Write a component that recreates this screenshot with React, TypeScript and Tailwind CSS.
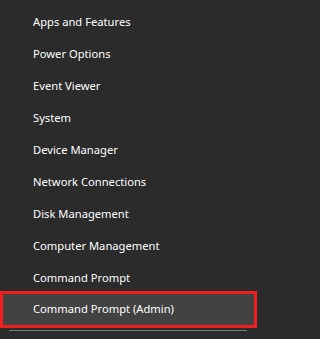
const items = [
  "Apps and Features",
  "Power Options",
  "Event Viewer",
  "System",
  "Device Manager",
  "Network Connections",
  "Disk Management",
  "Computer Management",
  "Command Prompt",
];

export default function App() {
  return (
    <div className="min-h-screen w-full bg-[#2b2b2b]">
      <div
        className="h-[339px] w-[257px] overflow-hidden pt-[6px] text-[11.2px] text-white"
        style={{ fontFamily: '"Segoe UI", "Noto Sans", "Open Sans", sans-serif' }}
      >
        {items.map((label) => (
          <div key={label} className="flex h-[32px] items-center pl-[33px]">
            {label}
          </div>
        ))}
        <div className="-mt-[3px] flex h-[37px] items-center border-[3px] border-[#f21d1d] bg-[#424242] pl-[30px]">
          Command Prompt (Admin)
        </div>
        <div className="ml-[9px] mt-[2px] h-px w-[238px] bg-[#7a7a7a]" />
      </div>
    </div>
  );
}
